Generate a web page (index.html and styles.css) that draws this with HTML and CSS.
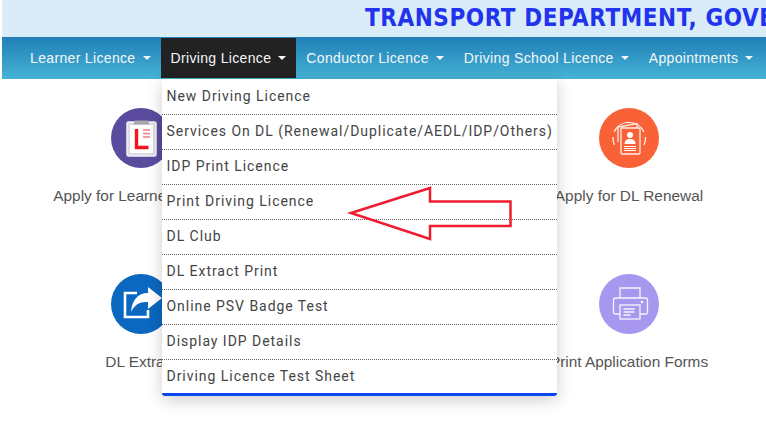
FILE: index.html
```html
<!DOCTYPE html>
<html lang="en">
<head>
<meta charset="utf-8">
<title>Transport Department</title>
<link rel="stylesheet" href="styles.css">
</head>
<body>
<div class="page">
  <header class="banner"><h1 class="banner-title">TRANSPORT DEPARTMENT, GOVERNMENT OF INDIA</h1></header>
  <nav class="nav">
    <div class="nav-item">Learner Licence<span class="caret"></span></div>
    <div class="nav-item nav-item-active">Driving Licence<span class="caret"></span></div>
    <div class="nav-item">Conductor Licence<span class="caret"></span></div>
    <div class="nav-item">Driving School Licence<span class="caret"></span></div>
    <div class="nav-item">Appointments<span class="caret"></span></div>
  </nav>
  <main class="cards">
    <div class="card">
      <svg class="icon" viewBox="0 0 60 60"><circle cx="30" cy="30" r="30" fill="#5b4b9f"/><rect x="16" y="14" width="29" height="34" rx="1.5" fill="#dfdde4" stroke="#f2f2f5" stroke-width="1.5"/><rect x="19" y="17" width="23" height="28" fill="#fff"/><path d="M24 12.500h13l1.500 4h-16z" fill="#a8a6ad"/><path d="M25.500 21v18.500h12" fill="none" stroke="#f3141f" stroke-width="3.400"/><path d="M32 22h7M32 25.500h7M32 29h7" stroke="#f47a85" stroke-width="1.400"/></svg>
      <p class="card-label">Apply for Learner Licence</p>
    </div>
    <div class="card"></div>
    <div class="card">
      <svg class="icon" viewBox="0 0 60 60"><circle cx="30" cy="30" r="30" fill="#f96137"/><g fill="none" stroke="#fff" stroke-width="1.300" opacity=".9"><path d="M15 24a16.500 16.500 0 0 1 30 0"/><path d="M15.500 37a16 16 0 0 1 -1.500 -8M45 37a16 16 0 0 0 1.500 -8"/><path d="M19 34V19l19-3.500V20"/><rect x="22" y="20" width="19" height="26" rx="1"/></g><circle cx="31" cy="27" r="3" fill="#fff"/><path d="M25.500 36c0-4 3-5 5.500-5s5.500 1 5.500 5z" fill="#fff"/><path d="M25 38.500h12M25 40.500h12M25 42.500h12" stroke="#fff" stroke-width="1"/></svg>
      <p class="card-label">Apply for DL Renewal</p>
    </div>
    <div class="card">
      <svg class="icon" viewBox="0 0 60 60"><circle cx="30" cy="30" r="30" fill="#0a68c1"/><path d="M37 36v7H14V19h12" fill="none" stroke="#fff" stroke-width="2.600"/><path d="M37 13l14 11-14 11v-7c-8-.5-13 2-17 10 1-12 7-19 17-19z" fill="#fff"/></svg>
      <p class="card-label">DL Extract</p>
    </div>
    <div class="card"></div>
    <div class="card">
      <svg class="icon" viewBox="0 0 60 60"><circle cx="30" cy="30" r="30" fill="#a797ef"/><g fill="none" stroke="#fff" stroke-width="1.300" opacity=".9"><path d="M21 24V14h20v10"/><path d="M21 40h-5a1.500 1.500 0 0 1-1.500-1.500V26a2 2 0 0 1 2-2h30a2 2 0 0 1 2 2v12.500a1.500 1.500 0 0 1-1.500 1.500H41"/><rect x="21" y="31" width="20" height="14"/><path d="M24.500 35h11M24.500 38h11M24.500 41h7"/></g><circle cx="43" cy="28" r="1.200" fill="#fff"/></svg>
      <p class="card-label">Print Application Forms</p>
    </div>
  </main>
  <ul class="menu">
    <li class="menu-item">New Driving Licence</li>
    <li class="menu-item">Services On DL (Renewal/Duplicate/AEDL/IDP/Others)</li>
    <li class="menu-item">IDP Print Licence</li>
    <li class="menu-item">Print Driving Licence</li>
    <li class="menu-item">DL Club</li>
    <li class="menu-item">DL Extract Print</li>
    <li class="menu-item">Online PSV Badge Test</li>
    <li class="menu-item">Display IDP Details</li>
    <li class="menu-item">Driving Licence Test Sheet</li>
  </ul>
  <svg class="arrow" viewBox="0 0 170 60" width="170" height="60"><path d="M7 27L86 2v13.500h80.500v24.500H86v13z"/></svg>
</div>
</body>
</html>
```
FILE: styles.css
```css
* { box-sizing: border-box; }
html, body { margin: 0; padding: 0; height: 100%; overflow: hidden; background: #fff; }
.page { position: relative; width: 766px; height: 425px; padding-left: 2px; overflow: hidden; font-family: "Liberation Sans", Arial, sans-serif; }
.banner { height: 37px; background: #d9ecf7; overflow: hidden; white-space: nowrap; padding-left: 363px; }
.banner-title { margin: 0; font: 700 24px/37px "DejaVu Sans Condensed", "DejaVu Sans", sans-serif; font-stretch: condensed; color: #2233ee; letter-spacing: .55px; }
.nav { height: 42px; display: flex; padding: 1px 0 1px 18px; background: linear-gradient(#1f7fb7, #47b3d5); }
.nav-item { display: flex; align-items: center; padding: 0 10px; color: #f4f7f9; font-size: 14px; letter-spacing: .34px; white-space: nowrap; }
.nav-item-active { background: #222; }
.caret { width: 0; height: 0; margin-left: 7px; border: 4px solid transparent; border-top-color: currentColor; border-bottom: 0; }
.cards { display: grid; grid-template-columns: repeat(3, 244px); grid-auto-rows: 166px; padding: 29px 0 0 17px; }
.card { display: flex; flex-direction: column; align-items: center; }
.icon { width: 60px; height: 60px; display: block; }
.card-label { margin: 19px 0 0; font-size: 15.4px; line-height: 18px; color: #555; white-space: nowrap; }
.menu { position: absolute; left: 162px; top: 79px; width: 395px; margin: 0; padding: 1px 0 0; list-style: none; background: #fff; border-bottom: 3px solid #0645f0; border-radius: 0 0 3px 3px; box-shadow: 0 4px 16px rgba(0,0,0,.2); }
.menu-item { height: 35px; padding-left: 4.5px; border-bottom: 1px dotted #666; font: 400 14px/33px Roboto, sans-serif; letter-spacing: .96px; color: #444; white-space: nowrap; }
.menu-item:last-child { height: 33px; border-bottom: 0; }
.arrow { position: absolute; left: 344px; top: 186px; }
.arrow path { fill: none; stroke: #ee1c2e; stroke-width: 2.5px; }
```
